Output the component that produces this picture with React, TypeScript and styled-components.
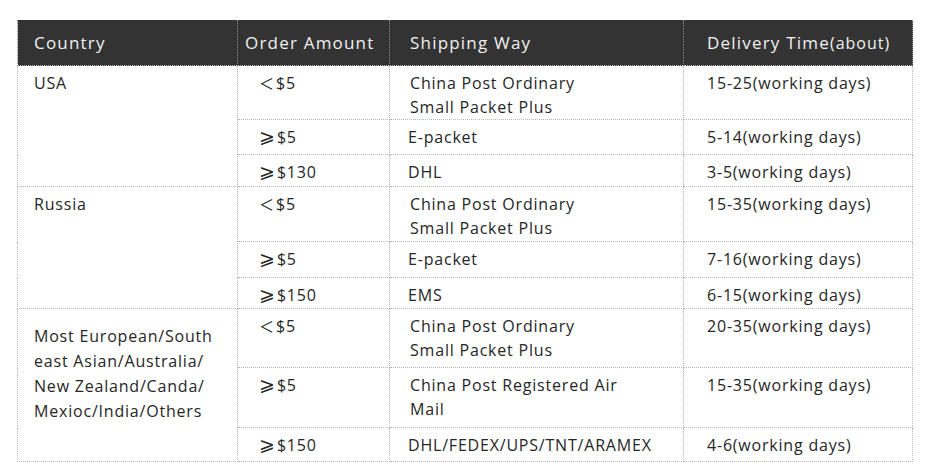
import React from 'react';
import styled, { createGlobalStyle } from 'styled-components';

const GlobalStyle = createGlobalStyle`
  body {
    margin: 0;
    background: #fff;
    font-family: "Open Sans", "Noto Sans CJK SC", "DejaVu Sans", sans-serif;
  }
`;

const Page = styled.div`
  padding: 20px 0 0 17px;
`;

const Table = styled.table`
  width: 895px;
  border-collapse: collapse;
  table-layout: fixed;
  color: #262626;
  font-size: 16px;
  line-height: 24px;
`;

const HeadCell = styled.th<{ $pad: number }>`
  height: 45px;
  padding: 0 0 0 ${p => p.$pad}px;
  background: #333;
  color: #f1f1f1;
  font-weight: 400;
  font-size: 17px;
  letter-spacing: 1.2px;
  text-align: left;
  vertical-align: middle;
  white-space: nowrap;
  border-left: 1px dotted #8a8a8a;
  border-right: 1px dotted #8a8a8a;
`;

const Small = styled.span`
  font-size: 16px;
  letter-spacing: 1px;
`;

const Cell = styled.td<{ $pad: number; $top?: number; $lh?: number }>`
  padding: ${p => p.$top ?? 5}px 4px 0 ${p => p.$pad}px;
  vertical-align: top;
  border: 1px dotted #b8b8b8;
  letter-spacing: 0.8px;
  line-height: ${p => p.$lh ?? 24}px;
  white-space: nowrap;
`;

const Sign = styled.span<{ $size: number }>`
  display: inline-block;
  font-size: ${p => p.$size}px;
  line-height: 1;
  letter-spacing: 0;
  margin-right: 2px;
`;

const Row = styled.tr<{ $h: number }>`
  height: ${p => p.$h}px;
`;

type Line = {
  sign: string;
  amount: string;
  way: string[];
  time: string;
  h: number;
};

type Group = {
  country: string[];
  top: number;
  rows: Line[];
};

const cpo = ['China Post Ordinary', 'Small Packet Plus'];

const groups: Group[] = [
  {
    country: ['USA'],
    top: 5,
    rows: [
      { sign: '＜', amount: '$5', way: cpo, time: '15-25(working days)', h: 54 },
      { sign: '⩾', amount: '$5', way: ['E-packet'], time: '5-14(working days)', h: 35 },
      { sign: '⩾', amount: '$130', way: ['DHL'], time: '3-5(working days)', h: 32 },
    ],
  },
  {
    country: ['Russia'],
    top: 5,
    rows: [
      { sign: '＜', amount: '$5', way: cpo, time: '15-35(working days)', h: 55 },
      { sign: '⩾', amount: '$5', way: ['E-packet'], time: '7-16(working days)', h: 36 },
      { sign: '⩾', amount: '$150', way: ['EMS'], time: '6-15(working days)', h: 31 },
    ],
  },
  {
    country: ['Most European/South', 'east Asian/Australia/', 'New Zealand/Canda/', 'Mexioc/India/Others'],
    top: 15,
    rows: [
      { sign: '＜', amount: '$5', way: cpo, time: '20-35(working days)', h: 59 },
      { sign: '⩾', amount: '$5', way: ['China Post Registered Air', 'Mail'], time: '15-35(working days)', h: 60 },
      { sign: '⩾', amount: '$150', way: ['DHL/FEDEX/UPS/TNT/ARAMEX'], time: '4-6(working days)', h: 34 },
    ],
  },
];

const Lines = ({ items }: { items: string[] }) => (
  <>
    {items.map((t, i) => (
      <React.Fragment key={i}>
        {i > 0 && <br />}
        {t}
      </React.Fragment>
    ))}
  </>
);

export default function App() {
  return (
    <>
      <GlobalStyle />
      <Page>
        <Table>
          <colgroup>
            <col style={{ width: 220 }} />
            <col style={{ width: 152 }} />
            <col style={{ width: 294 }} />
            <col style={{ width: 229 }} />
          </colgroup>
          <thead>
            <tr>
              <HeadCell $pad={16}>Country</HeadCell>
              <HeadCell $pad={7}>Order Amount</HeadCell>
              <HeadCell $pad={20}>Shipping Way</HeadCell>
              <HeadCell $pad={23}>
                Delivery Time<Small>(about)</Small>
              </HeadCell>
            </tr>
          </thead>
          <tbody>
            {groups.map(g =>
              g.rows.map((r, i) => (
                <Row key={g.country[0] + i} $h={r.h}>
                  {i === 0 && (
                    <Cell rowSpan={g.rows.length} $pad={16} $top={g.top} $lh={25}>
                      <Lines items={g.country} />
                    </Cell>
                  )}
                  <Cell $pad={21}>
                    <Sign $size={r.sign === '＜' ? 15 : 19}>{r.sign}</Sign>
                    {r.amount}
                  </Cell>
                  <Cell $pad={r.way.length > 1 ? 20 : 18}>
                    <Lines items={r.way} />
                  </Cell>
                  <Cell $pad={23}>{r.time}</Cell>
                </Row>
              ))
            )}
          </tbody>
        </Table>
      </Page>
    </>
  );
}
